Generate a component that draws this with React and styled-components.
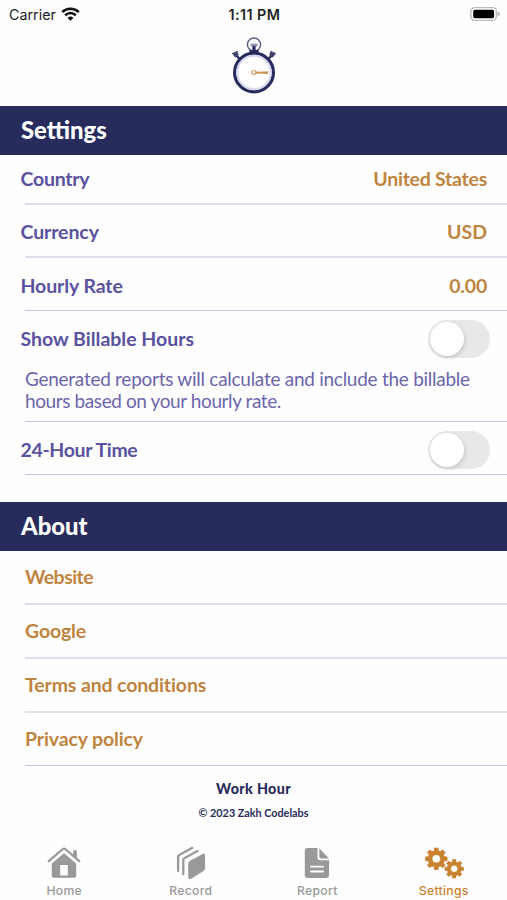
import React, { useState } from "react";
import styled, { createGlobalStyle } from "styled-components";

const navy = "#272c5d";
const purple = "#5a529f";
const gold = "#bf8440";

const GlobalStyle = createGlobalStyle`
  * {
    box-sizing: border-box;
  }
  body {
    margin: 0;
    background: #fefefe;
  }
`;

const Screen = styled.div`
  width: 507px;
  height: 900px;
  display: flex;
  flex-direction: column;
  overflow: hidden;
  background: #fefefe;
  font-family: Lato, "Open Sans", sans-serif;
`;

const StatusBar = styled.div`
  height: 28px;
  padding: 0 7px 0 9px;
  display: grid;
  grid-template-columns: 1fr auto 1fr;
  align-items: center;
  font-family: Inter, sans-serif;
  font-size: 14.3px;
  color: #222;
`;

const Carrier = styled.div`
  display: flex;
  align-items: center;
  gap: 5px;
`;

const Clock = styled.div`
  font-weight: 600;
  font-size: 14.3px;
  letter-spacing: 0.45px;
`;

const Battery = styled.svg`
  justify-self: end;
`;

const LogoArea = styled.div`
  height: 78px;
  padding-top: 9px;
  display: flex;
  justify-content: center;
`;

const SectionHeader = styled.h2`
  flex: none;
  height: 49px;
  margin: ${({ $gap }) => $gap || 0}px 0 0;
  padding-left: 21px;
  background: ${navy};
  color: #fff;
  font-size: 23.8px;
  font-weight: 900;
  line-height: 49px;
`;

const Row = styled.div`
  flex: none;
  height: ${({ $height }) => $height}px;
  padding: ${({ $top }) => $top || 0}px 20px ${({ $bottom }) => $bottom || 0}px
    ${({ $inset }) => ($inset ? 25 : 20.5)}px;
  display: flex;
  align-items: center;
  justify-content: space-between;
`;

const Divider = styled.hr`
  flex: none;
  width: 482px;
  height: ${({ $soft }) => ($soft ? 2 : 1)}px;
  margin: 0 0 0 25px;
  border: 0;
  background: ${({ $soft }) => ($soft ? "#dfdfec" : "#c5c3df")};
`;

const Label = styled.span`
  color: ${({ $gold }) => ($gold ? gold : purple)};
  font-size: 19.5px;
  font-weight: 700;
  line-height: 24px;
  white-space: nowrap;
  letter-spacing: ${({ $spacing }) => $spacing || 0}px;
`;

const Note = styled.p`
  flex: none;
  height: 53px;
  margin: 0;
  padding: 0 0 0 25px;
  color: #6c65ab;
  font-size: 19px;
  line-height: 22px;
  white-space: nowrap;
`;

const NoteLine = styled.span`
  display: block;
  letter-spacing: ${({ $spacing }) => $spacing || 0}px;
`;

const Switch = styled.button`
  width: 62px;
  height: 38px;
  margin-right: -3px;
  padding: 2px;
  display: flex;
  justify-content: ${({ $on }) => ($on ? "flex-end" : "flex-start")};
  border: 0;
  border-radius: 19px;
  background: ${({ $on }) => ($on ? gold : "#e8e8ea")};
`;

const Knob = styled.span`
  width: 34px;
  height: 34px;
  border-radius: 50%;
  background: #fff;
  box-shadow: 1px 2px 4px rgba(0, 0, 0, 0.15);
`;

const Credits = styled.div`
  flex: none;
  height: 72px;
  padding-top: 14px;
  display: flex;
  flex-direction: column;
  align-items: center;
  color: ${navy};
`;

const AppName = styled.div`
  font-size: 14.3px;
  font-weight: 900;
  line-height: 18px;
  letter-spacing: 0.35px;
`;

const Copyright = styled.div`
  margin-top: 7px;
  font-size: 10.8px;
  font-weight: 700;
  line-height: 16px;
`;

const TabBar = styled.nav`
  flex: none;
  height: 62px;
  padding: 8px 0 0 1px;
  display: grid;
  grid-template-columns: repeat(4, 126.5px);
`;

const Tab = styled.div`
  display: flex;
  flex-direction: column;
  align-items: center;
  color: ${({ $active }) => ($active ? "#c9822f" : "#999")};
  font-family: Inter, sans-serif;
  font-size: 12.2px;
  font-weight: 500;
  line-height: 15px;
  letter-spacing: 0.3px;
  svg {
    margin-bottom: 3px;
  }
`;

const WifiIcon = () => (
  <svg width="19" height="14" viewBox="0 0 19 14" fill="none" stroke="#111" strokeWidth="2.5">
    <path d="M1.2 5.1a11.8 11.8 0 0 1 16.6 0" />
    <path d="M4.2 8.3a7.5 7.5 0 0 1 10.6 0" />
    <path d="M9.5 13.8 6.6 10.9a4.1 4.1 0 0 1 5.8 0z" fill="#111" stroke="none" />
  </svg>
);

const BatteryIcon = () => (
  <Battery width="30" height="16" viewBox="0 0 31 16">
    <rect x="0.9" y="1.4" width="26.4" height="13.2" rx="4.2" fill="#fff" stroke="#bdbdbd" strokeWidth="1.5" />
    <rect x="3.3" y="3.7" width="21.6" height="8.6" rx="1.8" fill="#000" />
    <path d="M28.6 5.8q2.2.7 2.2 2.2t-2.2 2.2z" fill="#aaa" />
  </Battery>
);

const StopwatchLogo = () => (
  <svg width="46" height="58" viewBox="0 0 46 58" fill="none">
    <circle cx="23" cy="7.6" r="6.6" stroke="#5f6388" strokeWidth="1.5" />
    <path d="M19.5 6.7h7v2.6h-7z" fill="#8b8eac" />
    <path d="M21.4 9h3.2v6h-3.2z" fill={navy} />
    <path d="M18.3 13h9.4v2.5h-9.4z" fill={navy} />
    <path d="m5.3 18.3 3.6 4.2M40.7 18.3l-3.6 4.2" stroke={navy} strokeWidth="2.4" />
    <path d="m.9 16.2 5.5-2.5 1.3 4.4-3.6 2.5zM45.1 16.2l-5.5-2.5-1.3 4.4 3.6 2.5z" fill="#41456f" />
    <circle cx="23" cy="35.5" r="19.4" fill="#fff" stroke={navy} strokeWidth="3.2" />
    <circle cx="23" cy="35.5" r="16.7" stroke="#d8d7ed" strokeWidth="2" />
    <circle cx="22.8" cy="35.5" r="2" stroke="#cda064" strokeWidth="1.1" />
    <path d="m24.6 34.2 3 .5 9.4-.5v2.8l-9.4-.5-3 .7z" fill="#cb9350" />
  </svg>
);

const HomeIcon = () => (
  <svg width="34" height="34" viewBox="0 0 34 34">
    <path d="M1.7 15.2 15.9 3a1.8 1.8 0 0 1 2.3 0l14.1 12.2" fill="none" stroke="#999" strokeWidth="2.2" strokeLinecap="round" />
    <path d="M26.2 4.2h3.6v8.2l-3.6-3.1z" fill="#999" />
    <path
      d="M17 7.2 29.2 17.6v11.6a2.6 2.6 0 0 1-2.6 2.6H7.4a2.6 2.6 0 0 1-2.6-2.6V17.6zM13.2 19v10.4h7.6V19z"
      fill="#999"
      fillRule="evenodd"
    />
  </svg>
);

const RecordIcon = () => (
  <svg width="34" height="34" viewBox="0 0 34 34" fill="none" stroke="#999" strokeWidth="2.3" strokeLinecap="round">
    <path d="M4.1 25V10.8q0-1.1 1-1.7l13-7.2" />
    <path d="M9.3 28.2V13.9q0-1.1 1-1.7l13.2-7.3" />
    <path d="M14.8 17.2q0-1.3 1.1-1.9l13.4-7.1q1.3-.6 1.3.9v13.5q0 1.2-1 1.8l-13 8.2q-1.8 1-1.8-1z" fill="#999" strokeWidth="1" />
  </svg>
);

const ReportIcon = () => (
  <svg width="34" height="34" viewBox="0 0 34 34">
    <path d="M8 2h9.5v9.3q0 2.9 2.9 2.9h8.7v14.6a3.2 3.2 0 0 1-3.2 3.2H8a3.2 3.2 0 0 1-3.2-3.2V5.2A3.2 3.2 0 0 1 8 2z" fill="#999" />
    <path d="m19.3 2.2 9.6 10.2h-8q-1.6 0-1.6-1.6z" fill="#999" />
    <path d="M11 20.7h12.1M11 25.5h12.1" stroke="#fefefe" strokeWidth="1.8" strokeLinecap="round" />
  </svg>
);

const gearPath = (cx, cy, outer, inner, hole) => {
  const teeth = 8;
  const points = [];
  for (let i = 0; i < teeth; i++) {
    const mid = (i * 2 * Math.PI) / teeth - Math.PI / 2;
    [[-0.27, inner], [-0.17, outer], [0.17, outer], [0.27, inner]].forEach(([offset, r]) => {
      const x = cx + r * Math.cos(mid + offset);
      const y = cy + r * Math.sin(mid + offset);
      points.push(`${x.toFixed(2)} ${y.toFixed(2)}`);
    });
  }
  return `M${points.join("L")}ZM${cx - hole} ${cy}a${hole} ${hole} 0 1 0 ${hole * 2} 0a${hole} ${hole} 0 1 0 ${-hole * 2} 0Z`;
};

const GearsIcon = () => (
  <svg width="40" height="34" viewBox="0 0 40 34" fill="#c9822f" stroke="#c9822f" strokeWidth="0.6" strokeLinejoin="round" fillRule="evenodd">
    <path d={gearPath(12.3, 12.8, 11, 8.3, 4.1)} />
    <path d={gearPath(30.2, 22.8, 9.4, 7, 3.5)} />
  </svg>
);

const tabs = [
  { name: "Home", icon: HomeIcon },
  { name: "Record", icon: RecordIcon },
  { name: "Report", icon: ReportIcon },
  { name: "Settings", icon: GearsIcon, active: true },
];

const links = [
  { name: "Website", soft: true, spacing: -0.55 },
  { name: "Google", soft: true, spacing: -0.15 },
  { name: "Terms and conditions", soft: true, spacing: -0.13 },
  { name: "Privacy policy", spacing: -0.13 },
];

const Toggle = () => {
  const [on, setOn] = useState(false);
  return (
    <Switch type="button" role="switch" aria-checked={on} $on={on} onClick={() => setOn(!on)}>
      <Knob />
    </Switch>
  );
};

const App = () => (
  <Screen>
    <GlobalStyle />
    <StatusBar>
      <Carrier>
        Carrier
        <WifiIcon />
      </Carrier>
      <Clock>1:11 PM</Clock>
      <BatteryIcon />
    </StatusBar>
    <LogoArea>
      <StopwatchLogo />
    </LogoArea>

    <SectionHeader>Settings</SectionHeader>
    <Row $height={48}>
      <Label $spacing={-0.25}>Country</Label>
      <Label $gold $spacing={-0.25}>United States</Label>
    </Row>
    <Divider $soft />
    <Row $height={51} $top={3}>
      <Label $spacing={-0.1}>Currency</Label>
      <Label $gold>USD</Label>
    </Row>
    <Divider $soft />
    <Row $height={52} $top={3}>
      <Label $spacing={-0.1}>Hourly Rate</Label>
      <Label $gold $spacing={-0.2}>0.00</Label>
    </Row>
    <Divider />
    <Row $height={57} $bottom={1}>
      <Label>Show Billable Hours</Label>
      <Toggle />
    </Row>
    <Note>
      <NoteLine $spacing={-0.27}>Generated reports will calculate and include the billable</NoteLine>
      <NoteLine $spacing={-0.4}>hours based on your hourly rate.</NoteLine>
    </Note>
    <Divider />
    <Row $height={52} $top={4}>
      <Label $spacing={-0.35}>24-Hour Time</Label>
      <Toggle />
    </Row>
    <Divider />

    <SectionHeader $gap={27}>About</SectionHeader>
    {links.map(({ name, soft, spacing }) => (
      <React.Fragment key={name}>
        <Row $inset $height={52}>
          <Label $gold $spacing={spacing}>{name}</Label>
        </Row>
        <Divider $soft={soft} />
      </React.Fragment>
    ))}

    <Credits>
      <AppName>Work Hour</AppName>
      <Copyright>© 2023 Zakh Codelabs</Copyright>
    </Credits>
    <TabBar>
      {tabs.map(({ name, icon: Icon, active }) => (
        <Tab key={name} $active={active}>
          <Icon />
          {name}
        </Tab>
      ))}
    </TabBar>
  </Screen>
);

export default App;
